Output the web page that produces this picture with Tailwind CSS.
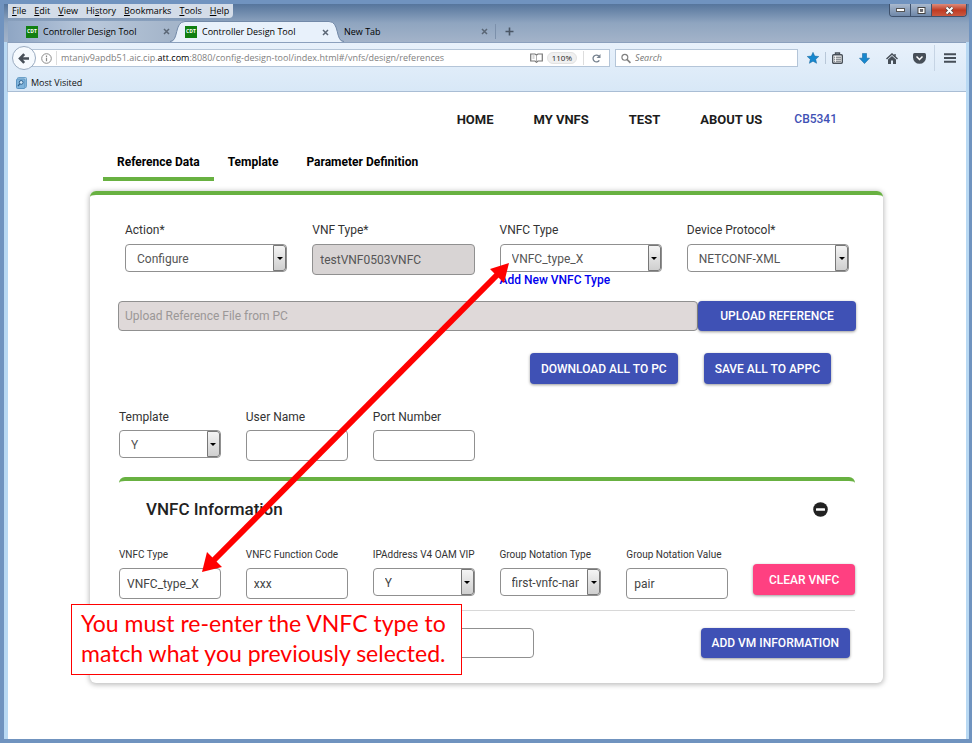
<!DOCTYPE html>
<html lang="en">
<head>
<meta charset="utf-8">
<title>Controller Design Tool</title>
<script src="https://cdn.jsdelivr.net/npm/@tailwindcss/browser@4"></script>
</head>
<body class="relative flex min-h-screen flex-col bg-[#7093bf] pt-1 pr-[3px] pb-1 pl-1 font-['Roboto',sans-serif] text-[#333]">
<div class="flex flex-1 flex-col bg-[#b9d9f3]">

  <!-- Title bar: menu and tabs -->
  <header class="bg-linear-to-b from-[#56759c] via-[#8fa5c0] to-[#a3b3c9] font-['Open_Sans',sans-serif] text-[9px] text-black">
    <div class="flex h-[17px] items-start justify-between pl-1">
      <nav aria-label="Menu bar" class="flex h-[14px] items-center gap-2 rounded-br bg-[#d3dce8] pr-1 pl-1">
        <button><u>F</u>ile</button><button><u>E</u>dit</button><button><u>V</u>iew</button><button>Hi<u>s</u>tory</button><button><u>B</u>ookmarks</button><button><u>T</u>ools</button><button><u>H</u>elp</button>
      </nav>
      <div class="mr-[2px] flex h-[13px] overflow-hidden rounded-b border border-t-0 border-[#3f526d]">
        <button aria-label="Minimize" class="flex w-[21px] items-center justify-center border-r border-[#3f526d] bg-linear-to-b from-[#a9b9ce] to-[#6f88a9]"><span class="h-[4px] w-[9px] border border-[#555] bg-white"></span></button>
        <button aria-label="Restore" class="flex w-[21px] items-center justify-center border-r border-[#3f526d] bg-linear-to-b from-[#a9b9ce] to-[#6f88a9]"><svg class="size-[9px]" viewBox="0 0 9 9"><rect x="1" y="1.5" width="7" height="6" fill="#fff" stroke="#444" stroke-width="1"/><rect x="3.2" y="3.5" width="2.6" height="2" fill="#667" stroke="#444" stroke-width=".6"/></svg></button>
        <button aria-label="Close" class="flex w-[34px] items-center justify-center bg-linear-to-b from-[#dc8a7a] via-[#c03a22] to-[#c9583f]"><svg class="size-[9px]" viewBox="0 0 9 9"><path d="M1.5 1.5l6 6M7.5 1.5l-6 6" stroke="#444" stroke-width="3.4"/><path d="M1.5 1.5l6 6M7.5 1.5l-6 6" stroke="#fff" stroke-width="2"/></svg></button>
      </div>
    </div>
    <div class="flex h-[21px] items-stretch pl-1">
      <div class="flex w-[162px] items-center gap-[5px] bg-linear-to-r from-[#8fa6c4] via-[#b9c8db] to-[#a4b5ca] pl-[18px]">
        <span class="flex h-3 w-3 items-center justify-center bg-[#118011] text-[5px] font-bold text-white">CDT</span>
        <span class="flex-1 whitespace-nowrap">Controller Design Tool</span>
        <button aria-label="Close tab"><svg class="size-[7px]" viewBox="0 0 7 7"><path d="M1 1l5 5M6 1L1 6" stroke="#5a6675" stroke-width="1.5"/></svg></button>
      </div>
      <svg class="h-[21px] w-[15px] shrink-0" viewBox="0 0 15 21"><path d="M0 0H15V21H0z" fill="#a4b5ca"/><path d="M0 21C9 21 4 .5 15 .5V21z" fill="#e8f1fb"/><path d="M0 20.5C9 20.5 4 .5 15 .5" fill="none" stroke="#7289a8"/></svg>
      <div class="flex w-[144px] items-center gap-[5px] border-t border-[#7289a8] bg-[#e8f1fb]">
        <span class="flex h-3 w-3 items-center justify-center bg-[#118011] text-[5px] font-bold text-white">CDT</span>
        <span class="flex-1 whitespace-nowrap">Controller Design Tool</span>
        <button aria-label="Close tab"><svg class="size-[7px]" viewBox="0 0 7 7"><path d="M1 1l5 5M6 1L1 6" stroke="#5a6675" stroke-width="1.5"/></svg></button>
      </div>
      <svg class="h-[21px] w-[15px] shrink-0" viewBox="0 0 15 21"><path d="M15 21C6 21 11 .5 0 .5V21z" fill="#e8f1fb"/><path d="M15 20.5C6 20.5 11 .5 0 .5" fill="none" stroke="#7289a8"/></svg>
      <div class="my-[3px] flex w-[152px] items-center border-r border-[#7c90ab] pr-[7px]">
        <span class="flex-1">New Tab</span>
        <button aria-label="Close tab"><svg class="size-[7px]" viewBox="0 0 7 7"><path d="M1 1l5 5M6 1L1 6" stroke="#5a6675" stroke-width="1.5"/></svg></button>
      </div>
      <button aria-label="New tab" class="px-[9px]"><svg class="size-[9px]" viewBox="0 0 9 9"><path d="M4.500 .5v8M.5 4.500h8" stroke="#4a5665" stroke-width="1.6"/></svg></button>
    </div>
  </header>

  <!-- Toolbar -->
  <div class="mr-[3px] ml-[3px] border-t border-b border-l border-[#a9bdd4] border-t-[#8ba0bd] bg-linear-to-b from-[#e8f1fb] to-[#d8e8f7] font-['Open_Sans',sans-serif] text-[9px] text-[#666]">
    <div class="flex h-[30px] items-center pr-[10px] pl-1">
      <button aria-label="Back" class="z-10 flex size-6 shrink-0 items-center justify-center rounded-full border border-[#9aabc0] bg-[#f6fafe]"><svg class="h-[11px] w-3" viewBox="0 0 12 11"><path d="M11 5.500H3M6.200 1.200L2 5.500l4.200 4.300" fill="none" stroke="#474f58" stroke-width="2.600"/></svg></button>
      <div class="-ml-1 flex h-[18px] flex-1 items-center border border-[#b4c5d8] bg-white pl-[8px]">
        <svg class="size-[11px] shrink-0" viewBox="0 0 11 11"><circle cx="5.500" cy="5.500" r="4.800" fill="none" stroke="#8b8b8b" stroke-width="1"/><path d="M5.500 4.800v3.400M5.500 2.600v1.300" stroke="#8b8b8b" stroke-width="1.200"/></svg>
        <span class="mx-1 h-[14px] w-px bg-[#ddd]"></span>
        <span class="flex-1 whitespace-nowrap text-[#808080]">mtanjv9apdb51.aic.cip.<span class="text-black">att.com</span>:8080/config-design-tool/index.html#/vnfs/design/references</span>
        <svg class="mr-1 h-[10px] w-[13px]" viewBox="0 0 13 10"><path d="M.7 1h4.300l1.500 1 1.500-1h4.300v7H8L6.500 9.300 5 8H.7z" fill="#fff" stroke="#777" stroke-width="1.200"/><path d="M2.500 3h2M2.500 5h2M6.500 2v6" stroke="#999" stroke-width=".8"/></svg>
        <span class="rounded-full border border-[#e2e2e2] bg-[#f0f0f0] px-1 text-[8px] leading-[10px] text-[#222]">110%</span>
        <span class="mr-2 ml-[6px] h-[14px] w-px bg-[#ddd]"></span>
        <button aria-label="Reload" class="mr-2"><svg class="size-[9px]" viewBox="0 0 9 9"><path d="M7.300 6.300A3.400 3.400 0 1 1 6.800 2" fill="none" stroke="#76828f" stroke-width="1.300"/><path d="M8.500 0v4H4.500z" fill="#76828f"/></svg></button>
      </div>
      <div class="ml-[5px] flex h-[18px] w-[183px] shrink-0 items-center gap-1 border border-[#b4c5d8] bg-white px-[5px]">
        <svg class="size-[11px]" viewBox="0 0 11 11"><circle cx="4.200" cy="4.200" r="3.200" fill="none" stroke="#808080" stroke-width="1.300"/><path d="M6.500 6.500L10.300 10.300" stroke="#808080" stroke-width="1.800"/></svg>
        <input aria-label="Search" placeholder="Search" class="w-full italic outline-none placeholder:text-[#777]">
      </div>
      <div class="flex shrink-0 items-center pl-[9px]">
        <button aria-label="Bookmark"><svg class="size-3" viewBox="0 0 12 12"><path d="M6 .3l1.700 3.800 4.100.4-3.100 2.700.9 4.100L6 9.200l-3.600 2.100.9-4.100L.2 4.500l4.100-.4z" fill="#1788cf" stroke="#16679d" stroke-width=".5"/></svg></button>
        <span class="mx-[6px] h-3 w-px bg-[#b8c7d8]"></span>
        <button aria-label="Library"><svg class="h-3 w-[11px]" viewBox="0 0 11 12"><rect x=".7" y="2.700" width="9.600" height="8.600" rx="1" fill="#fff" stroke="#474f58" stroke-width="1.400"/><path d="M3.500 2.500V1h4v1.500" fill="none" stroke="#474f58" stroke-width="1.400"/><path d="M2 5.200h1.200M4 5.200h5M2 7.200h1.200M4 7.200h5M2 9.200h1.200M4 9.200h5" stroke="#474f58" stroke-width=".9"/></svg></button>
        <button aria-label="Downloads" class="ml-4"><svg class="size-[11px]" viewBox="0 0 11 11"><path d="M3.500.4h4v4.800h3L5.500 10.600.5 5.200h3z" fill="#1788cf" stroke="#16679d" stroke-width=".6"/></svg></button>
        <button aria-label="Home" class="ml-4"><svg class="h-[11px] w-3" viewBox="0 0 12 11"><path d="M.5 6L6 1l5.500 5" fill="none" stroke="#474f58" stroke-width="1.500"/><path d="M2 6.500l4-3.600 4 3.600V11H7V7.500H5V11H2z" fill="#474f58"/><path d="M9 1v2.500" stroke="#474f58" stroke-width="1.400"/></svg></button>
        <button aria-label="Pocket" class="ml-[15px]"><svg class="h-[11px] w-[13px]" viewBox="0 0 13 11"><path d="M1.500 0h10Q13 0 13 1.500V4.500A6.500 6.300 0 0 1 0 4.500V1.500Q0 0 1.500 0z" fill="#474f58"/><path d="M3.500 3.500l3 3 3-3" fill="none" stroke="#fff" stroke-width="1.500"/></svg></button>
        <span class="mr-[9px] ml-[8px] h-[26px] w-px bg-[#c6d4e4]"></span>
        <button aria-label="Menu"><svg class="h-[10px] w-3" viewBox="0 0 12 10"><path d="M0 1.200h12M0 5h12M0 8.800h12" stroke="#474f58" stroke-width="1.900"/></svg></button>
      </div>
    </div>
    <div class="flex h-[18px] items-center gap-1 pt-px pl-2 text-[#111]">
      <svg class="h-3 w-[11px]" viewBox="0 0 11 12"><rect x="1.500" y=".5" width="9" height="10" rx="1" fill="#a9cde8" stroke="#6ba0c8"/><rect x=".5" y="2" width="8.500" height="9.500" rx="1" fill="#7fb4dc" stroke="#5c95c2"/><circle cx="5.200" cy="5.400" r="1.900" fill="#d5e9f7" stroke="#2c5f8c"/><path d="M3.800 6.900L2 9" stroke="#2c5f8c" stroke-width="1.200"/></svg>
      <a href="#">Most Visited</a>
    </div>
  </div>

  <!-- Page -->
  <main class="mr-[3px] ml-1 flex-1 bg-white pr-[83px] pb-[56px] pl-[82px]">
    <nav aria-label="Main" class="flex h-[56px] items-center justify-end gap-10 pr-[46px] text-[13px] font-bold text-[#1c1c1c]">
      <a href="#">HOME</a><a href="#">MY VNFS</a><a href="#">TEST</a><a href="#">ABOUT US</a>
      <a href="#" class="-ml-2 pb-[2px] text-[12px] font-medium text-[#3f51b5]">CB5341</a>
    </nav>
    <div role="tablist" class="flex h-[33px] pl-[13px] text-[12px] font-bold text-black">
      <button role="tab" class="border-b-4 border-[#68b141] px-[14px] pb-[2px]">Reference Data</button>
      <button role="tab" class="border-b-4 border-transparent px-[14px] pb-[2px]">Template</button>
      <button role="tab" class="border-b-4 border-transparent px-[14px] pb-[2px]">Parameter Definition</button>
    </div>

    <section class="mt-[10px] rounded-md border-t-4 border-[#68b141] pr-[27px] pb-[25px] pl-[28px] shadow-[0_1px_5px_1px_rgba(0,0,0,0.25)]">
      <div class="grid grid-cols-4 items-start gap-x-[25px] px-[7px] pt-[27px] text-[12px]">
        <div class="flex flex-col"><label for="action" class="mb-[6px] leading-4">Action*</label>
          <div class="flex h-7 overflow-hidden rounded border border-[#909090]"><select id="action" class="min-w-0 flex-1 appearance-none pt-px pl-[11px] text-[#555]"><option>Configure</option></select><span class="flex w-[13px] items-center justify-center rounded-r-[3px] border border-[#777] bg-linear-to-b from-[#f4f4f4] to-[#cfcfcf]"><span class="border-x-[3px] border-t-[3px] border-x-transparent border-t-black"></span></span></div></div>
        <div class="flex flex-col"><label for="vnf" class="mb-[6px] leading-4">VNF Type*</label>
          <input id="vnf" disabled value="testVNF0503VNFC" class="h-[31px] w-full rounded border border-[#909090] bg-[#d8d4d4] px-[7px] text-[#555]"></div>
        <div class="flex flex-col"><label for="vnfc" class="mb-[6px] leading-4">VNFC Type</label>
          <div class="flex h-7 overflow-hidden rounded border border-[#909090]"><select id="vnfc" class="min-w-0 flex-1 appearance-none pt-px pl-[11px] text-[#555]"><option>VNFC_type_X</option></select><span class="flex w-[13px] items-center justify-center rounded-r-[3px] border border-[#777] bg-linear-to-b from-[#f4f4f4] to-[#cfcfcf]"><span class="border-x-[3px] border-t-[3px] border-x-transparent border-t-black"></span></span></div>
          <a href="#" class="leading-4 font-medium text-[#0000ee]">Add New VNFC Type</a></div>
        <div class="flex flex-col"><label for="protocol" class="mb-[6px] leading-4">Device Protocol*</label>
          <div class="flex h-7 overflow-hidden rounded border border-[#909090]"><select id="protocol" class="min-w-0 flex-1 appearance-none pt-px pl-[11px] text-[#555]"><option>NETCONF-XML</option></select><span class="flex w-[13px] items-center justify-center rounded-r-[3px] border border-[#777] bg-linear-to-b from-[#f4f4f4] to-[#cfcfcf]"><span class="border-x-[3px] border-t-[3px] border-x-transparent border-t-black"></span></span></div></div>
      </div>

      <div class="mt-[13px] flex h-[30px] text-[12px]">
        <input aria-label="Upload Reference File from PC" disabled placeholder="Upload Reference File from PC" class="min-w-0 flex-1 rounded border border-[#909090] bg-[#dfd9d9] px-[6px] placeholder:text-[#9b9797]">
        <button class="w-[158px] rounded-sm bg-[#3f51b5] font-medium text-white shadow-[0_1px_3px_rgba(0,0,0,0.4)]">UPLOAD REFERENCE</button>
      </div>
      <div class="mt-[22px] flex h-[31px] justify-end gap-[26px] pr-[25px] text-[12px] font-medium text-white">
        <button class="rounded-sm bg-[#3f51b5] px-[11px] shadow-[0_1px_3px_rgba(0,0,0,0.4)]">DOWNLOAD ALL TO PC</button>
        <button class="rounded-sm bg-[#3f51b5] px-[11px] shadow-[0_1px_3px_rgba(0,0,0,0.4)]">SAVE ALL TO APPC</button>
      </div>

      <div class="mt-[25px] grid grid-cols-6 items-start gap-x-[25px] px-px text-[12px]">
        <div class="flex flex-col"><label for="template" class="mb-[5px] leading-4">Template</label>
          <div class="flex h-7 overflow-hidden rounded border border-[#909090]"><select id="template" class="min-w-0 flex-1 appearance-none pt-px pl-[11px] text-[#555]"><option>Y</option></select><span class="flex w-[13px] items-center justify-center rounded-r-[3px] border border-[#777] bg-linear-to-b from-[#f4f4f4] to-[#cfcfcf]"><span class="border-x-[3px] border-t-[3px] border-x-transparent border-t-black"></span></span></div></div>
        <div class="flex flex-col"><label for="user" class="mb-[5px] leading-4">User Name</label><input id="user" class="h-[31px] w-full rounded border border-[#909090] px-[7px]"></div>
        <div class="flex flex-col"><label for="port" class="mb-[5px] leading-4">Port Number</label><input id="port" class="h-[31px] w-full rounded border border-[#909090] px-[7px]"></div>
      </div>

      <div class="mx-px mt-4 rounded-t-md border-t-4 border-[#68b141]">
        <div class="flex h-[57px] items-center justify-between pr-[27px] pl-[27px]">
          <h2 class="text-[17px] font-medium text-[#222]">VNFC Information</h2>
          <button aria-label="Collapse"><svg class="size-[15px]" viewBox="0 0 15 15"><circle cx="7.500" cy="7.500" r="7.300" fill="#222"/><rect x="3" y="6.200" width="9" height="2.600" rx=".5" fill="#fff"/></svg></button>
        </div>
        <div class="grid grid-cols-6 items-start gap-x-[25px] pt-[9px] pb-[11px] text-[12px]">
          <div class="flex flex-col"><label for="v1" class="mb-[5px] text-[10px] leading-4 whitespace-nowrap">VNFC Type</label><input id="v1" value="VNFC_type_X" class="h-[31px] w-full rounded border border-[#909090] px-[7px] text-[#444]"></div>
          <div class="flex flex-col"><label for="v2" class="mb-[5px] text-[10px] leading-4 whitespace-nowrap">VNFC Function Code</label><input id="v2" value="xxx" class="h-[31px] w-full rounded border border-[#909090] px-[7px] text-[#444]"></div>
          <div class="flex flex-col"><label for="v3" class="mb-[5px] text-[10px] leading-4 whitespace-nowrap">IPAddress V4 OAM VIP</label>
            <div class="flex h-7 overflow-hidden rounded border border-[#909090]"><select id="v3" class="min-w-0 flex-1 appearance-none pt-px pl-[11px] text-[#444]"><option>Y</option></select><span class="flex w-[13px] items-center justify-center rounded-r-[3px] border border-[#777] bg-linear-to-b from-[#f4f4f4] to-[#cfcfcf]"><span class="border-x-[3px] border-t-[3px] border-x-transparent border-t-black"></span></span></div></div>
          <div class="flex flex-col"><label for="v4" class="mb-[5px] text-[10px] leading-4 whitespace-nowrap">Group Notation Type</label>
            <div class="flex h-7 overflow-hidden rounded border border-[#909090]"><select id="v4" class="mr-2 min-w-0 flex-1 appearance-none pt-px pl-[11px] text-[#444]"><option>first-vnfc-name</option></select><span class="flex w-[13px] shrink-0 items-center justify-center rounded-r-[3px] border border-[#777] bg-linear-to-b from-[#f4f4f4] to-[#cfcfcf]"><span class="border-x-[3px] border-t-[3px] border-x-transparent border-t-black"></span></span></div></div>
          <div class="flex flex-col"><label for="v5" class="mb-[5px] text-[10px] leading-4 whitespace-nowrap">Group Notation Value</label><input id="v5" value="pair" class="h-[31px] w-full rounded border border-[#909090] px-[7px] text-[#444]"></div>
          <button class="mt-[17px] h-[31px] rounded-sm bg-[#ff4081] font-medium text-white shadow-[0_1px_3px_rgba(0,0,0,0.4)]">CLEAR VNFC</button>
        </div>
        <div class="flex h-[48px] items-end justify-between border-t border-[#d8d8d8] pr-[5px] text-[12px]">
          <input aria-label="Number of VMs" class="ml-[226px] h-[30px] w-[189px] rounded border border-[#909090] px-[7px]">
          <button class="h-[30px] rounded-sm bg-[#3f51b5] px-[11px] font-medium text-white shadow-[0_1px_3px_rgba(0,0,0,0.4)]">ADD VM INFORMATION</button>
        </div>
      </div>
    </section>
  </main>
</div>

<!-- Annotation over the page -->
<svg class="pointer-events-none absolute top-[258px] left-[198px] h-[320px] w-[316px]" viewBox="198 258 316 320"><path d="M214 560L497 275" stroke="#f00" stroke-width="6"/><path d="M509 263L504 283 490 269zM202 572l5-20 15 15z" fill="#f00"/></svg>
<p class="absolute top-[604px] left-[71px] w-[391px] border border-[#f00] bg-white pt-[3px] pb-[6px] pl-[9px] font-['Lato',sans-serif] text-[23px] leading-[30px] whitespace-nowrap text-[#f00]">You must re-enter the VNFC type to<br>match what you previously selected.</p>
</body>
</html>
